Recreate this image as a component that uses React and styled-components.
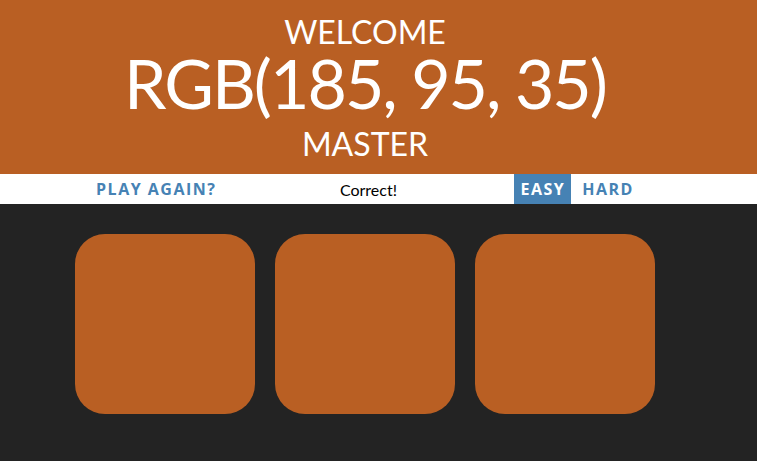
import React, { useState } from 'react'
import styled, { createGlobalStyle } from 'styled-components'

const GlobalStyle = createGlobalStyle`
  body {
    margin: 0;
    background: #232323;
    font-family: "Lato", "Liberation Sans", sans-serif;
  }
`

const Header = styled.h1`
  margin: 0;
  padding: 13px 27px 2px 0;
  background: rgb(185, 95, 35);
  color: white;
  text-align: center;
  font-weight: 400;
  text-transform: uppercase;
`
const Line = styled.span`
  display: block;
  font-size: ${props => props.size}px;
  line-height: ${props => props.lh}px;
  letter-spacing: ${props => props.ls || 0}px;
`
const Stripe = styled.div`
  background: white;
  height: 30px;
  display: flex;
  align-items: stretch;
  justify-content: center;
  padding-right: 27px;
`
const Button = styled.button`
  border: none;
  background: ${props => (props.selected ? 'steelblue' : 'white')};
  color: ${props => (props.selected ? 'white' : 'steelblue')};
  font-family: "Open Sans", "Liberation Sans", sans-serif;
  font-weight: 700;
  font-size: 16px;
  letter-spacing: 1.5px;
  text-transform: uppercase;
  padding: 0 6px;
  margin-left: ${props => props.gap || 0}px;
  height: 30px;
  cursor: pointer;
  outline: none;
`
const Message = styled.span`
  width: 292px;
  display: flex;
  align-items: center;
  justify-content: center;
  font-family: "Lato", "Liberation Sans", sans-serif;
  font-size: 16px;
  color: black;
`
const Container = styled.div`
  width: 600px;
  margin: 30px auto 0;
  display: flex;
  gap: 20px;
  padding-right: 27px;
  justify-content: center;
`
const Square = styled.div`
  width: 180px;
  height: 180px;
  border-radius: 30px;
  background: ${props => props.color};
`

export default function App() {
  const [hard, setHard] = useState(false)
  const color = 'rgb(185, 95, 35)'
  return (
    <>
      <GlobalStyle />
      <Header>
        <Line size={32} lh={38}>Welcome</Line>
        <Line size={68} lh={64} ls={-2}>{color}</Line>
        <Line size={32} lh={57}>Master</Line>
      </Header>
      <Stripe>
        <Button>Play Again?</Button>
        <Message>Correct!</Message>
        <Button selected={!hard} onClick={() => setHard(false)}>Easy</Button>
        <Button gap={5} selected={hard} onClick={() => setHard(true)}>Hard</Button>
      </Stripe>
      <Container>
        {[0, 1, 2].map(i => <Square key={i} color={color} />)}
      </Container>
    </>
  )
}
